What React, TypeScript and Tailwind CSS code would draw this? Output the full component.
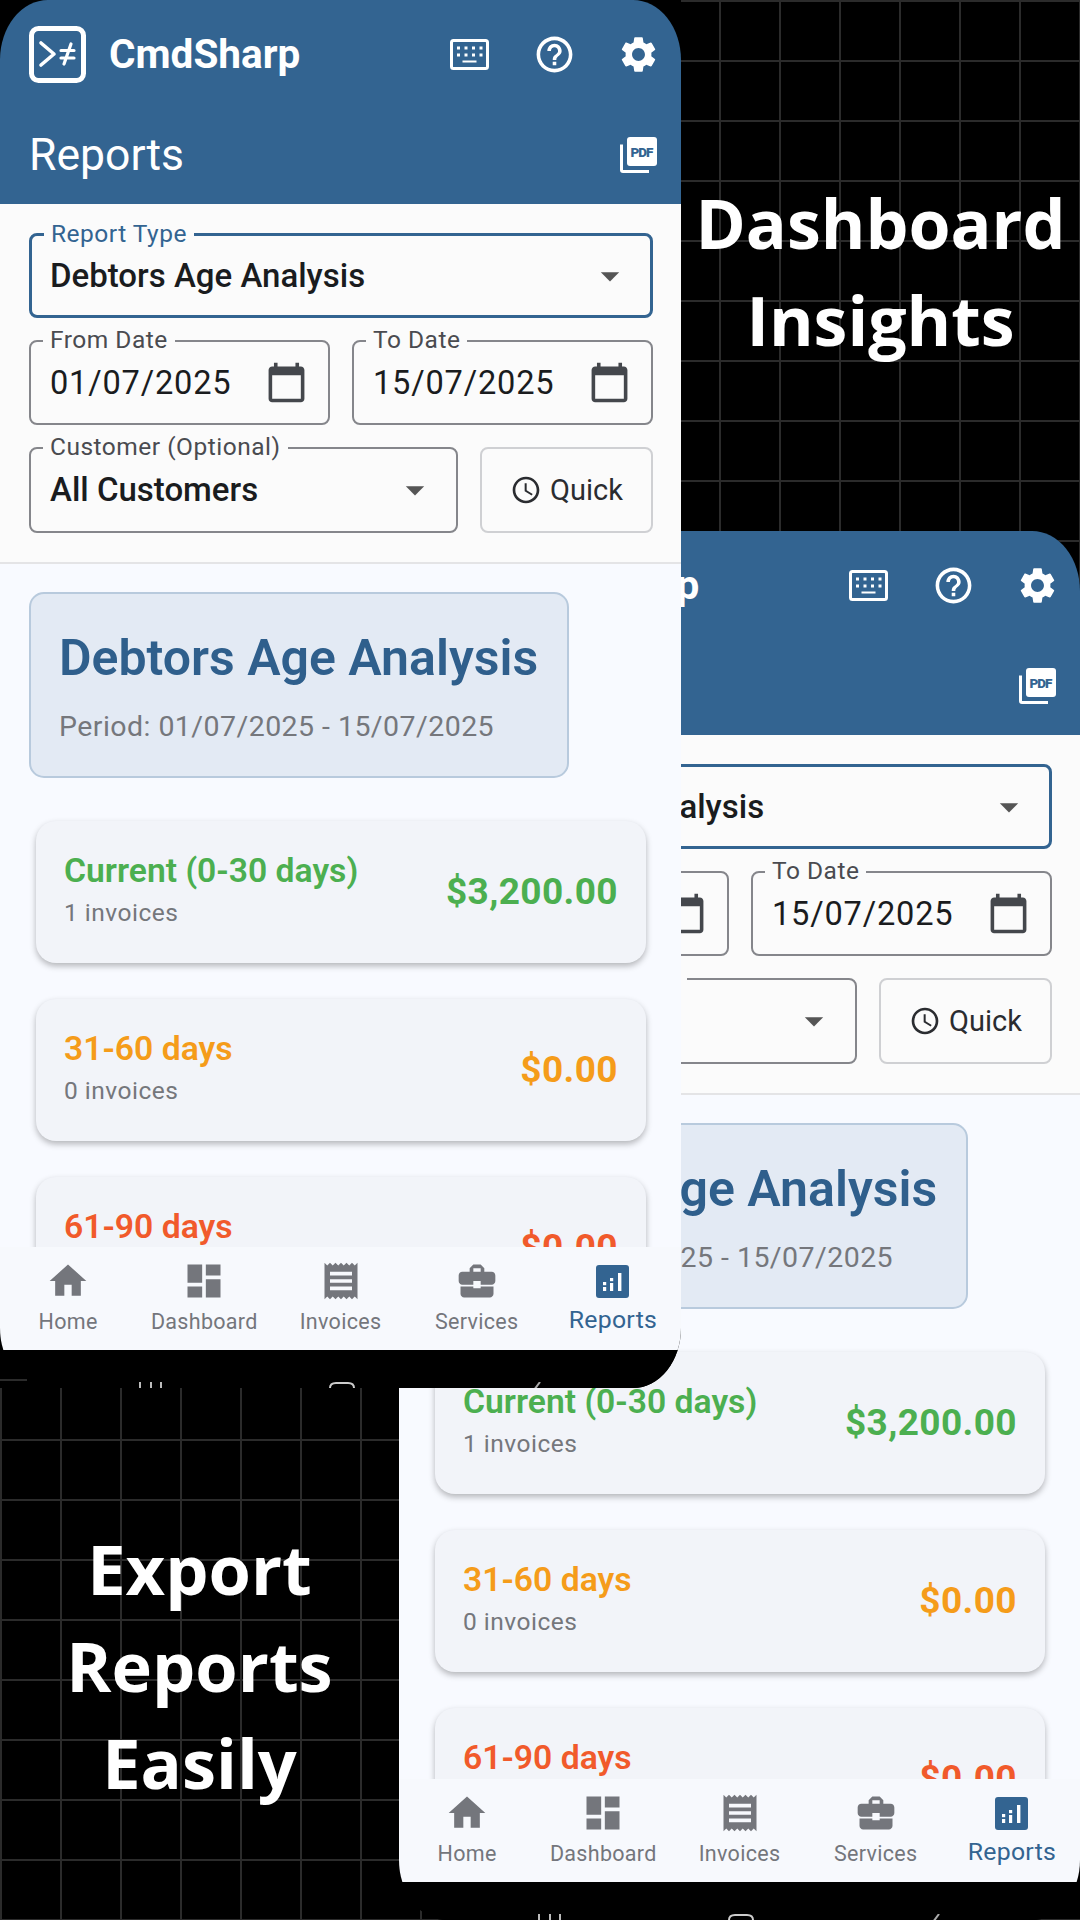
import React from "react";
import {
  MdHome, MdDashboard, MdReceipt, MdBusinessCenter,
  MdHelpOutline, MdSettings, MdCalendarToday, MdArrowDropDown, MdAccessTime,
} from "react-icons/md";

const Logo = () => (
  <svg width="57" height="57" viewBox="0 0 57 57" fill="none" stroke="white" strokeLinecap="round" strokeLinejoin="round">
    <rect x="2.5" y="2.5" width="52" height="52" rx="7" strokeWidth="5" />
    <path d="M12 17 L25 28 L12 39" strokeWidth="3.6" />
    <path d="M32 24.5 H45 M32 32 H45 M42 18 L35 38" strokeWidth="3.2" />
  </svg>
);

const KeyboardIcon = () => (
  <svg width="39" height="31" viewBox="0 0 39 31" fill="white">
    <rect x="1.5" y="1.5" width="36" height="28" rx="2" fill="none" stroke="white" strokeWidth="3" />
    {[7, 14.5, 22, 29.5].map((x) => <rect key={x} x={x} y="7.5" width="3" height="3" />)}
    {[7, 14.5, 22, 29.5].map((x) => <rect key={x} x={x} y="14.5" width="3" height="3" />)}
    <rect x="12.5" y="21.5" width="14" height="2" />
  </svg>
);

const PdfIcon = () => (
  <svg width="37" height="36" viewBox="0 0 37 36" fill="white">
    <rect x="7" y="0" width="30" height="29" rx="3" />
    <path d="M1.5 7.5 V33 Q1.5 34.5 3 34.5 H29" fill="none" stroke="white" strokeWidth="3" />
    <text x="22" y="20" textAnchor="middle" fontFamily="'Roboto',sans-serif" fontWeight="900" fontSize="13.5" textLength="23" fill="#336491">PDF</text>
  </svg>
);

const ReportsIcon = () => (
  <svg width="33" height="33" viewBox="0 0 33 33">
    <rect width="33" height="33" rx="3" fill="#336491" />
    <g fill="white">
      <rect x="7" y="17" width="3.2" height="3.2" />
      <rect x="7" y="22" width="3.2" height="4" />
      <rect x="14" y="13" width="3.2" height="3.2" />
      <rect x="14" y="18" width="3.2" height="8" />
      <rect x="22" y="8" width="3.4" height="18" />
    </g>
  </svg>
);

function Outlined({ label, focus, className, children }: { label: string; focus?: boolean; className: string; children: React.ReactNode }) {
  return (
    <div className={`relative flex items-center rounded-lg ${focus ? "border-[3px] border-[#336491] pl-[18px]" : "border-2 border-[#85868b] pl-[19px]"} ${className}`}>
      <span className={`absolute left-[12px] top-[-16px] bg-[#fbfbfb] px-[7px] text-[24.5px] leading-[28px] tracking-[0.5px] whitespace-nowrap ${focus ? "text-[#336491]" : "text-[#4a4b50]"}`}>{label}</span>
      {children}
    </div>
  );
}

function AgeCard({ label, sub, amount, color }: { label: string; sub: string; amount: string; color: string }) {
  return (
    <div className="flex h-[142px] shrink-0 items-center justify-between rounded-[20px] bg-[#f2f4f9] pl-[28px] pr-[28px] shadow-[0_3px_6px_rgba(0,0,0,0.28)]">
      <div className="flex flex-col gap-[12px]">
        <span className={`text-[33.7px] leading-[30px] font-semibold ${color}`}>{label}</span>
        <span className="text-[24.5px] leading-[30px] tracking-[0.5px] text-[#75777c]">{sub}</span>
      </div>
      <span className={`text-[37px] leading-[40px] font-bold tracking-[0.4px] ${color}`}>{amount}</span>
    </div>
  );
}

function NavItem({ icon, label, active }: { icon: React.ReactNode; label: string; active?: boolean }) {
  return (
    <div className={`flex flex-1 flex-col items-center ${active ? "text-[#336491]" : "text-[#74767c]"}`}>
      <div className="flex h-[44px] items-center">{icon}</div>
      <span className={`whitespace-nowrap tracking-[0.3px] ${active ? "mt-[2px] text-[24.8px] leading-[30px]" : "mt-[4px] text-[21.5px] leading-[30px]"}`}>{label}</span>
    </div>
  );
}

function Phone({ className }: { className: string }) {
  return (
    <div className={`flex w-[681px] flex-col overflow-hidden rounded-[48px/60px] bg-black font-['Roboto',sans-serif] ${className}`}>
      <header className="flex h-[204px] shrink-0 flex-col bg-[#336491] text-white">
        <div className="flex h-[108px] items-center pl-[29px]">
          <Logo />
          <span className="ml-[23px] text-[40.5px] leading-[44px] font-bold">CmdSharp</span>
          <div className="ml-auto flex items-center pr-[21px]">
            <KeyboardIcon />
            <MdHelpOutline size={43} className="ml-[44px]" />
            <MdSettings size={43} className="ml-[41px]" />
          </div>
        </div>
        <div className="mt-[22px] flex items-center justify-between pl-[29px] pr-[24px]">
          <span className="text-[44.5px] leading-[50px]">Reports</span>
          <PdfIcon />
        </div>
      </header>

      <section className="flex h-[360px] shrink-0 flex-col border-b-2 border-[#e4e4e6] bg-[#fbfbfb] pl-[29px] pr-[28px] pt-[29px] text-[#1a1c1e]">
        <Outlined label="Report Type" focus className="h-[85px] pr-[18px]">
          <span className="text-[33px] leading-[40px] font-medium">Debtors Age Analysis</span>
          <MdArrowDropDown size={44} className="ml-auto text-[#555]" />
        </Outlined>
        <div className="mt-[22px] flex gap-[22px]">
          {["01/07/2025", "15/07/2025"].map((d, i) => (
            <Outlined key={d} label={i ? "To Date" : "From Date"} className="h-[85px] flex-1 pr-[20px]">
              <span className="text-[32.6px] leading-[40px] tracking-[0.8px]">{d}</span>
              <MdCalendarToday size={43} className="ml-auto text-[#44474c]" />
            </Outlined>
          ))}
        </div>
        <div className="mt-[22px] flex gap-[22px]">
          <Outlined label="Customer (Optional)" className="h-[86px] flex-1 pr-[19px]">
            <span className="text-[33px] leading-[40px] font-medium">All Customers</span>
            <MdArrowDropDown size={44} className="ml-auto text-[#555]" />
          </Outlined>
          <div className="flex h-[86px] w-[173px] items-center justify-center gap-[8px] rounded-lg border-2 border-[#cfd0d3] text-[#2a2c30]">
            <MdAccessTime size={32} />
            <span className="text-[29px] leading-[36px]">Quick</span>
          </div>
        </div>
      </section>

      <main className="flex min-h-0 flex-1 flex-col overflow-hidden bg-[#f8faff] pl-[29px] pr-[35px] pt-[28px]">
        <div className="flex h-[186px] w-[540px] shrink-0 flex-col rounded-[15px] border-2 border-[#b8cadd] bg-[#e3eaf4] pl-[28px] pt-[36px]">
          <span className="text-[50px] leading-[56px] font-semibold whitespace-nowrap text-[#2f5f8c]">Debtors Age Analysis</span>
          <span className="mt-[23px] text-[28.5px] leading-[36px] tracking-[0.45px] text-[#75777c]">Period: 01/07/2025 - 15/07/2025</span>
        </div>
        <div className="mt-[43px] flex flex-col gap-[36px] pl-[7px]">
          <AgeCard label="Current (0-30 days)" sub="1 invoices" amount="$3,200.00" color="text-[#4caf50]" />
          <AgeCard label="31-60 days" sub="0 invoices" amount="$0.00" color="text-[#f59c1a]" />
          <AgeCard label="61-90 days" sub="0 invoices" amount="$0.00" color="text-[#f15a2b]" />
        </div>
      </main>

      <nav className="flex h-[103px] shrink-0 items-start bg-[#f7f9fd] pt-[12px]">
        <NavItem icon={<MdHome size={44} />} label="Home" />
        <NavItem icon={<MdDashboard size={44} />} label="Dashboard" />
        <NavItem icon={<MdReceipt size={44} />} label="Invoices" />
        <NavItem icon={<MdBusinessCenter size={44} />} label="Services" />
        <NavItem icon={<ReportsIcon />} label="Reports" active />
      </nav>

      <div className="flex h-[38px] shrink-0 items-start bg-black pl-[138px] pt-[32px] text-white">
        <svg width="25" height="8" viewBox="0 0 25 8" fill="#bbb"><rect x="1" width="2" height="8" /><rect x="12" width="2" height="8" /><rect x="22" width="2" height="8" /></svg>
        <svg width="26" height="8" viewBox="0 0 26 8" fill="none" stroke="#ccc" strokeWidth="2" className="ml-[166px]"><path d="M1 8 V6 Q1 1 7 1 H19 Q25 1 25 6 V8" /></svg>
        <svg width="8" height="8" viewBox="0 0 8 8" fill="none" stroke="#aaa" strokeWidth="2" className="ml-[178px]"><path d="M7 0 L1 8" /></svg>
      </div>
    </div>
  );
}

const grid = "bg-[linear-gradient(to_right,#2b2b2b_2px,transparent_2px),linear-gradient(to_bottom,#2b2b2b_2px,transparent_2px)] bg-[size:60px_60px]";

export default function App() {
  return (
    <div className="relative h-[1920px] w-[1080px] overflow-hidden bg-black font-['Open_Sans',sans-serif]">
      <div className={`absolute left-[681px] top-0 h-[620px] w-[399px] bg-[position:-22px_0] ${grid}`} />
      <div className={`absolute left-0 top-[1388px] h-[532px] w-[1080px] bg-[position:0_-9px] ${grid}`} />
      <h2 className="absolute left-[681px] top-[174px] w-[399px] text-center text-[68px] leading-[97px] font-bold text-white">Dashboard<br />Insights</h2>
      <h2 className="absolute left-0 top-[1520px] w-[399px] text-center text-[68.5px] leading-[97px] font-bold text-white">Export<br />Reports<br />Easily</h2>
      <Phone className="absolute left-[399px] top-[531px] h-[1389px]" />
      <Phone className="absolute left-0 top-0 h-[1388px]" />
      <div className="absolute left-0 top-[1379px] h-[2px] w-[27px] bg-[#2b2b2b]" />
    </div>
  );
}
